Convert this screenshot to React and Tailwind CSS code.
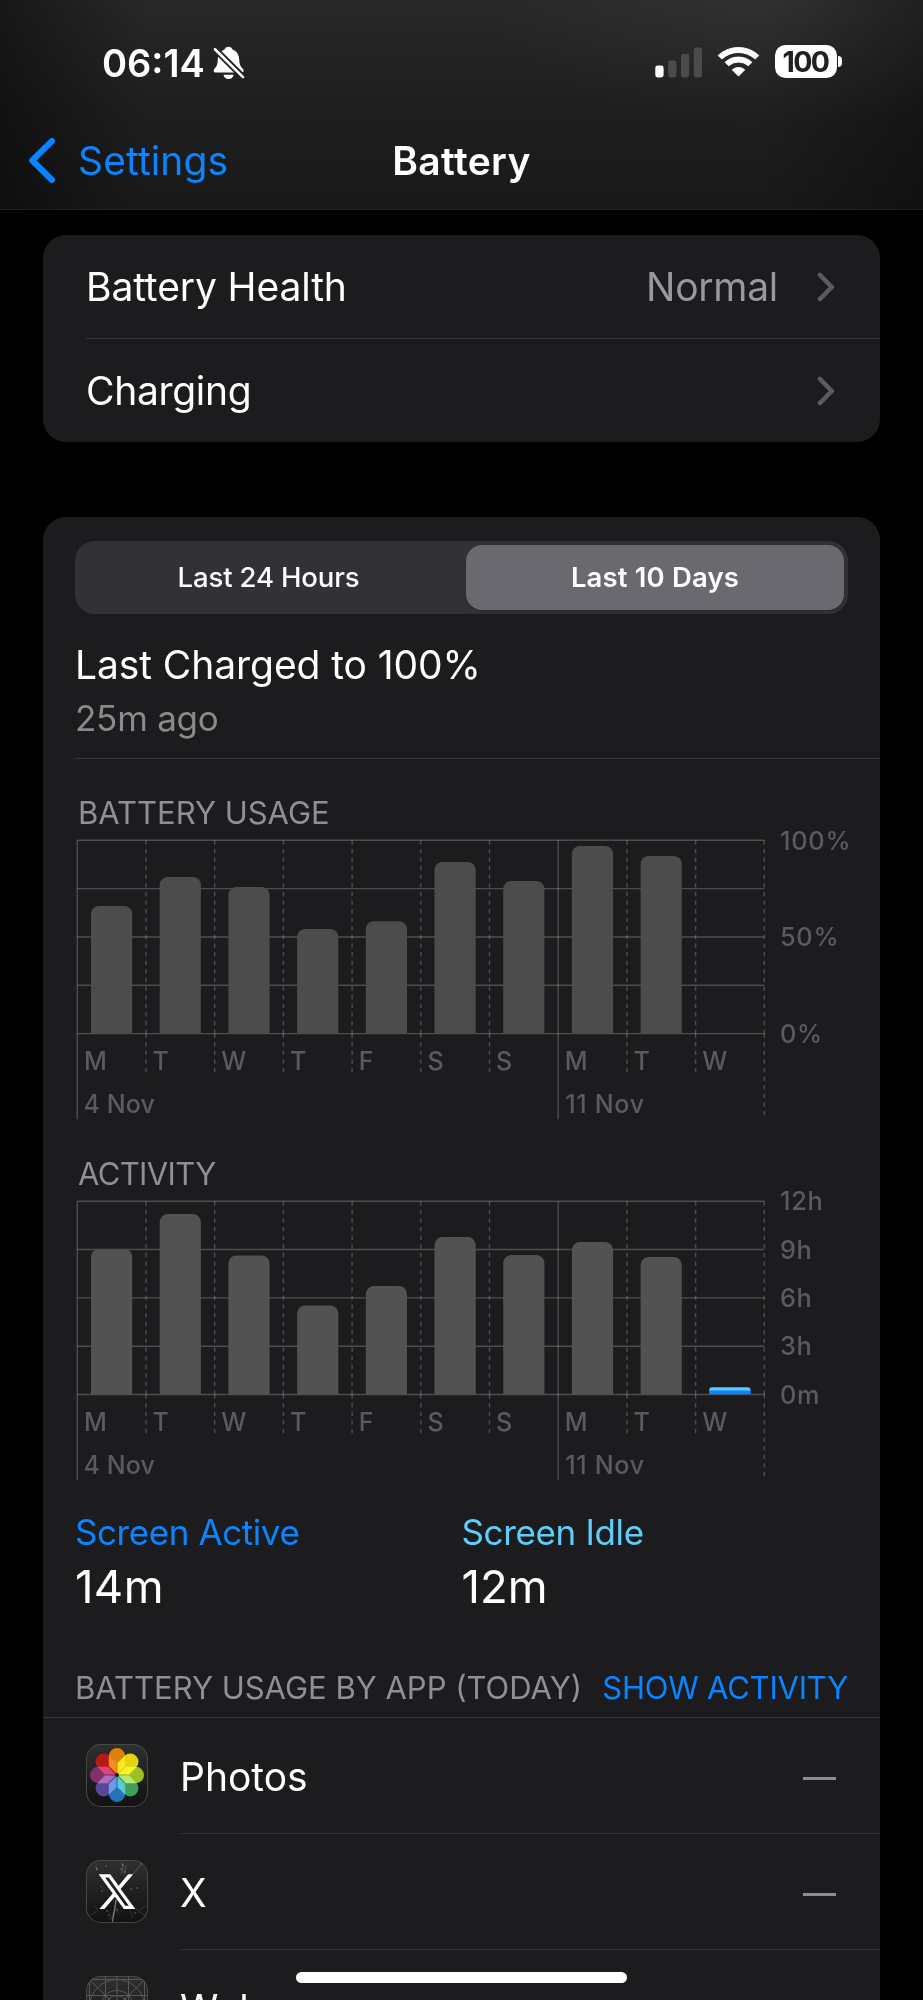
import React from "react";

const DAYS = ["M", "T", "W", "T", "F", "S", "S", "M", "T", "W"];
const COL = 68.7;
const LEFT = 2.3;
const LINE = "rgba(255,255,255,0.22)";
const LABEL = "#5b5b5f";

function Chart({ top, bars, barColor, yLabels, today }) {
  const bottom = top + 193.3;
  const right = LEFT + COL * 10;
  return (
    <svg width="773" height="290" viewBox="0 0 773 290" className="block overflow-visible font-['Inter',sans-serif]">
      {[0, 1, 2, 3, 4].map((i) => (
        <line key={i} x1={LEFT} x2={right} y1={top + i * 48.33} y2={top + i * 48.33} stroke={LINE} strokeWidth="1.4" />
      ))}
      {DAYS.map((d, i) => {
        const x = LEFT + i * COL;
        const week = i % 7 === 0;
        return (
          <g key={i}>
            {week ? (
              <line x1={x} x2={x} y1={top} y2={top + 279} stroke={LINE} strokeWidth="1.4" />
            ) : (
              <path
                d={`M${x} ${top}V${bottom}M${x} ${bottom}V${bottom + 39}`}
                stroke={LINE}
                strokeWidth="1.4"
                strokeDasharray="4.3 4.3"
              />
            )}
            <text x={x + 6.6} y={top + 229.3} fontSize="25" fontWeight="500" fill={LABEL}>
              {d}
            </text>
          </g>
        );
      })}
      <path
        d={`M${right} ${top}V${bottom}M${right} ${bottom}V${bottom + 81.7}`}
        stroke={LINE}
        strokeWidth="1.4"
        strokeDasharray="4.3 4.3"
      />
      {bars.map((h, i) => {
        const x = LEFT + i * COL + 13.7;
        return (
          <path
            key={i}
            fill={barColor}
            d={`M${x} ${bottom - 0.4}V${bottom - h + 8}a8 8 0 0 1 8-8h25.2a8 8 0 0 1 8 8V${bottom - 0.4}z`}
          />
        );
      })}
      {today && (
        <g>
          <path fill="#5ac8fa" d={`M634.2 ${bottom - 3.5}v-1.6a2.6 2.6 0 0 1 2.6-2.2h36.2a2.6 2.6 0 0 1 2.6 2.2v1.6z`} />
          <path fill="#0a84ff" d={`M634.2 ${bottom - 0.3}v-3.6h41.4v3.6z`} />
        </g>
      )}
      <text x={LEFT + 6.2} y={top + 273} fontSize="25" fontWeight="500" letterSpacing="0.1" fill={LABEL}>
        4 Nov
      </text>
      <text x={LEFT + 7 * COL + 7} y={top + 273} fontSize="25" fontWeight="500" letterSpacing="0.7" fill={LABEL}>
        11 Nov
      </text>
      {yLabels.map(([t, row]) => (
        <text key={t} x="704.9" y={top + 9.2 + row * 48.33} fontSize="25.3" fontWeight="500" letterSpacing="0.8" fill={LABEL}>
          {t}
        </text>
      ))}
    </svg>
  );
}

function Chevron() {
  return (
    <svg width="18" height="30" viewBox="0 0 18 30" fill="none" className="block">
      <path d="M3 3L14.8 15L3 27" stroke="#5c5c60" strokeWidth="4.6" strokeLinecap="round" strokeLinejoin="round" />
    </svg>
  );
}

function BellOff() {
  return (
    <svg width="32" height="34" viewBox="213 46 32 34" className="block">
      <mask id="bell-slot" maskUnits="userSpaceOnUse" x="210" y="40" width="40" height="44">
        <rect x="210" y="40" width="40" height="44" fill="#fff" />
        <path d="M208 42.3L250 84" stroke="#000" strokeWidth="6.4" />
      </mask>
      <g mask="url(#bell-slot)" fill="#fff">
        <path d="M228.5 46.7c2 0 3.6 1.2 4 2.9 4.3 1.6 6.5 5.3 6.7 9.8.2 4.3.9 6.3 2.9 8.7 1 1.2 1.5 1.9 1.5 2.7 0 1.2-.9 1.8-2.4 1.8h-25.3c-1.4 0-2.2-.6-2.2-1.8 0-.8.4-1.5 1.4-2.7 2-2.4 2.5-4.4 2.7-8.7.2-4.5 2.4-8.2 6.7-9.8.4-1.7 2-2.9 4-2.9z" />
        <path d="M223.5 74.7h10.1c-.4 2.7-2.4 4.3-5 4.3s-4.7-1.6-5.1-4.3z" />
      </g>
      <path d="M215 49.3L243 77.1" stroke="#fff" strokeWidth="2.7" strokeLinecap="round" />
    </svg>
  );
}

function Signal() {
  return (
    <svg width="47" height="31" viewBox="655 46.5 47 31" className="block">
      <rect x="655.3" y="65" width="8.3" height="12" rx="2.4" fill="#fff" />
      <rect x="668.2" y="60" width="8.2" height="17" rx="2.4" fill="#4b4b4b" />
      <rect x="681" y="53.2" width="8.2" height="23.8" rx="2.4" fill="#4b4b4b" />
      <rect x="693.8" y="47" width="8.2" height="30" rx="2.4" fill="#4b4b4b" />
    </svg>
  );
}

function Wifi() {
  return (
    <svg width="43" height="32" viewBox="-21.5 -31 43 32" className="block">
      <g fill="#fff" stroke="#fff" strokeWidth="1" strokeLinejoin="round">
        <path d="M-20.3-21.6A30 30 0 0 1 20.3-21.6L16.7-18A24.6 24.6 0 0 0-16.7-18z" />
        <path d="M-13.4-14.7A19.8 19.8 0 0 1 13.4-14.7L9.9-11.2A14.9 14.9 0 0 0-9.9-11.2z" />
        <path d="M-6.2-7.2A9.5 9.5 0 0 1 6.2-7.2L0-.9z" />
      </g>
    </svg>
  );
}

const PETALS = ["#df7f10", "#e4d40f", "#9dbf22", "#3fa05c", "#2274ba", "#564894", "#843068", "#b61a15"];

function PhotosIcon() {
  return (
    <svg width="62" height="62" viewBox="0 0 62 62" className="block">
      <g className="isolate">
        {PETALS.map((c, i) => (
          <path
            key={c}
            className="mix-blend-screen"
            transform={`rotate(${i * 45} 31 31)`}
            fill={c}
            d="M31 30L22.8 22V12.2a8.2 8.2 0 0 1 16.4 0V22z"
          />
        ))}
        <circle cx="31" cy="31" r="1.8" fill="#161616" />
      </g>
    </svg>
  );
}

function XIcon() {
  return (
    <svg width="62" height="62" viewBox="0 0 62 62" className="block">
      <g stroke="#fff" fill="none" strokeLinecap="round">
        <path d="M26.5 61L29 47L30 40" strokeWidth="1.3" opacity=".45" />
        <path d="M28 52L24 60M30 48L33 54M9 46l3 5M4 55l6-3" strokeWidth=".5" opacity=".25" />
        <path d="M36 3l1 5l-2 6M40 6l-2 8M57 2L47 14M10 6l1 4" strokeWidth=".8" opacity=".28" />
        <path d="M60 46l-7 4M50 49l9 7M44 50l3 8M14 26l4 3" strokeWidth=".6" opacity=".22" />
        <path
          d="M11 9v.1M20 6v.1M37 5v.1M39 12v.1M18 17v.1M51 28v.1M45 29v.1M16 31v.1M21 51v.1M23 55v.1M31 50v.1M49 53v.1M35 9v.1"
          strokeWidth="1.5"
          opacity=".4"
        />
      </g>
      <path
        fill="#fff"
        transform="translate(31 31.7) scale(1.7 1.78) translate(-12.04 -12)"
        d="M18.6 2.25h2.95l-7.4 8.26 8.677 11.24H16.1l-5.3-6.9L4.65 21.75H1.68l7.83-8.75L1.254 2.25H8.08l4.9 6.4zm-1.65 17.65h2L7.15 4.03H5.05z"
      />
    </svg>
  );
}

function GridIcon() {
  return (
    <svg width="62" height="62" viewBox="0 0 62 62" className="block">
      <g stroke="#585858" strokeWidth="1" fill="none">
        <path d="M0 3.5h62M0 19.5h62M0 31h62M0 42.5h62M0 58.5h62M3.5 0v62M19.5 0v62M31 0v62M42.500 0v62M58.5 0v62M0 0l62 62M62 0L0 62" />
        <circle cx="31" cy="31" r="27.5" />
        <circle cx="31" cy="31" r="16.5" />
        <circle cx="31" cy="31" r="11.5" />
      </g>
    </svg>
  );
}

function AppRow({ icon, name }) {
  return (
    <div className="flex h-[116px] shrink-0 pl-[43px]">
      <div className="mt-[26px] h-[63px] w-[62px] shrink-0 overflow-hidden rounded-[15px] bg-linear-to-b from-[#303030] to-[#111111] ring-1 ring-[#474747] ring-inset">
        {icon}
      </div>
      <div className="ml-[32px] flex grow items-center justify-between border-b border-[#333335] pr-[44px]">
        <span className="pt-[2px] text-[39px] leading-[52px] text-white">{name}</span>
        <span className="mt-[6px] h-[3.5px] w-[33px] bg-[#8d8d91]" />
      </div>
    </div>
  );
}

export default function App() {
  return (
    <div className="relative flex h-[2000px] w-[923px] flex-col overflow-hidden bg-black font-['Inter',sans-serif] text-white">
      <header className="flex h-[210px] shrink-0 flex-col border-b border-[#222222] bg-[radial-gradient(ellipse_300px_130px_at_780px_0px,rgba(255,255,255,0.045),transparent),linear-gradient(to_right,rgba(0,0,0,0.42),transparent_16%,transparent_82%,rgba(0,0,0,0.32)),linear-gradient(to_bottom,#272828,#1e1e1e_55%,#191919)]">
        <div className="flex h-[124px] items-start justify-between pr-[81px] pl-[102px]">
          <div className="flex">
            <span className="mt-[39px] text-[38px] leading-[48px] font-semibold">06:14</span>
            <div className="mt-[46px] ml-[8px]">
              <BellOff />
            </div>
          </div>
          <div className="flex pt-[45px]">
            <div className="mt-[1.5px]">
              <Signal />
            </div>
            <div className="mt-[1px] ml-[15px]">
              <Wifi />
            </div>
            <div className="ml-[15px] flex items-center">
              <div className="flex h-[33px] w-[62px] items-center justify-center rounded-[10.5px] bg-white text-[28.5px] leading-[33px] font-bold tracking-[-0.055em] text-[#202020]">
                100
              </div>
              <div className="ml-[1.5px] h-[11px] w-[4px] rounded-r-full bg-white" />
            </div>
          </div>
        </div>
        <div className="grid grid-cols-[1fr_auto_1fr] pt-[11px]">
          <div className="flex items-start pl-[28px] text-[#0a84ff]">
            <svg width="30" height="48" viewBox="28 136 30 48" fill="none" className="mt-[1px] block">
              <path d="M52 141L32.2 160.5L52 180" stroke="currentColor" strokeWidth="6" strokeLinecap="round" strokeLinejoin="round" />
            </svg>
            <span className="ml-[20px] text-[39px] leading-[52px] tracking-[0.003em]">Settings</span>
          </div>
          <h1 className="text-[39px] leading-[52px] font-semibold tracking-[0.009em]">Battery</h1>
          <div />
        </div>
      </header>

      <main className="flex grow flex-col pr-[43px] pl-[43px]">
        <section className="mt-[25px] flex h-[207px] shrink-0 flex-col rounded-[23px] bg-[#1c1c1e] pl-[43px] text-[39px] leading-[52px]">
          <div className="flex h-[104px] items-center border-b border-[#363638] pr-[45px]">
            <span className="grow tracking-[-0.003em]">Battery Health</span>
            <span className="mr-[39px] tracking-[-0.007em] text-[#98989f]">Normal</span>
            <Chevron />
          </div>
          <div className="flex h-[103px] items-center justify-between pr-[45px]">
            <span className="tracking-[-0.008em]">Charging</span>
            <Chevron />
          </div>
        </section>

        <section className="mt-[75px] flex h-[1520px] shrink-0 flex-col rounded-t-[23px] bg-[#1c1c1e]">
          <div className="mx-[32px] mt-[24px] flex h-[73px] shrink-0 rounded-[20px] bg-[#313136] p-[4px] text-[27.5px] leading-[36px]">
            <div className="flex w-[387px] items-center justify-center pr-[8px] pb-[2px] font-medium tracking-[-0.005em]">
              Last 24 Hours
            </div>
            <div className="flex grow items-center justify-center rounded-[16px] bg-[#6a696f] pb-[2px] font-semibold tracking-[0.006em] shadow-[0_1px_2px_rgba(0,0,0,0.2)]">
              Last 10 Days
            </div>
          </div>

          <div className="mt-[25px] pl-[32px] text-[39px] leading-[52px] tracking-[-0.002em]">Last Charged to 100%</div>
          <div className="mt-[5px] pl-[32px] text-[35px] leading-[44px] tracking-[-0.007em] text-[#8a8a8c]">25m ago</div>
          <div className="mt-[18px] ml-[32px] h-px shrink-0 bg-[#363638]" />

          <h2 className="mt-[34px] h-[39px] pl-[35px] text-[31px] leading-[40px] text-[#8f8f96]">BATTERY USAGE</h2>
          <div className="ml-[32px]">
            <Chart
              top={8.3}
              barColor="#4c4c4c"
              bars={[127.7, 156.7, 146.7, 104.7, 112.4, 171.7, 152.7, 187.7, 177.7]}
              yLabels={[["100%", 0], ["50%", 2], ["0%", 4]]}
            />
          </div>

          <h2 className="mt-[32px] h-[39px] pl-[35px] text-[31px] leading-[40px] tracking-[-0.02em] text-[#8f8f96]">ACTIVITY</h2>
          <div className="ml-[32px]">
            <Chart
              top={8.2}
              today
              barColor="#525252"
              bars={[145.5, 180.4, 139, 89, 108.4, 157.4, 139.4, 152.4, 137.4]}
              yLabels={[["12h", 0], ["9h", 1], ["6h", 2], ["3h", 3], ["0m", 4]]}
            />
          </div>

          <div className="mt-[27px] grid shrink-0 grid-cols-2 pr-[32px] pl-[32px]">
            <div>
              <div className="text-[35px] leading-[44px] tracking-[-0.012em] text-[#0a84ff]">Screen Active</div>
              <div className="mt-[5px] h-[55px] text-[45.5px] leading-[56px] tracking-[0.008em]">14m</div>
            </div>
            <div>
              <div className="text-[35px] leading-[44px] tracking-[-0.01em] text-[#5fcdf9]">Screen Idle</div>
              <div className="mt-[5px] h-[55px] text-[45.5px] leading-[56px]">12m</div>
            </div>
          </div>

          <div className="mt-[54px] flex h-[50px] shrink-0 justify-between border-b border-[#363638] pr-[32px] pl-[32px] text-[31px] leading-[40px] whitespace-nowrap">
            <span className="text-[#8f8f96]">BATTERY USAGE BY APP (TODAY)</span>
            <span className="tracking-[-0.007em] text-[#0a84ff]">SHOW ACTIVITY</span>
          </div>

          <AppRow icon={<PhotosIcon />} name="Photos" />
          <AppRow icon={<XIcon />} name="X" />
          <AppRow icon={<GridIcon />} name="Web" />
        </section>
      </main>

      <div className="absolute bottom-[17px] left-[296px] h-[11px] w-[331px] rounded-full bg-white" />
    </div>
  );
}
